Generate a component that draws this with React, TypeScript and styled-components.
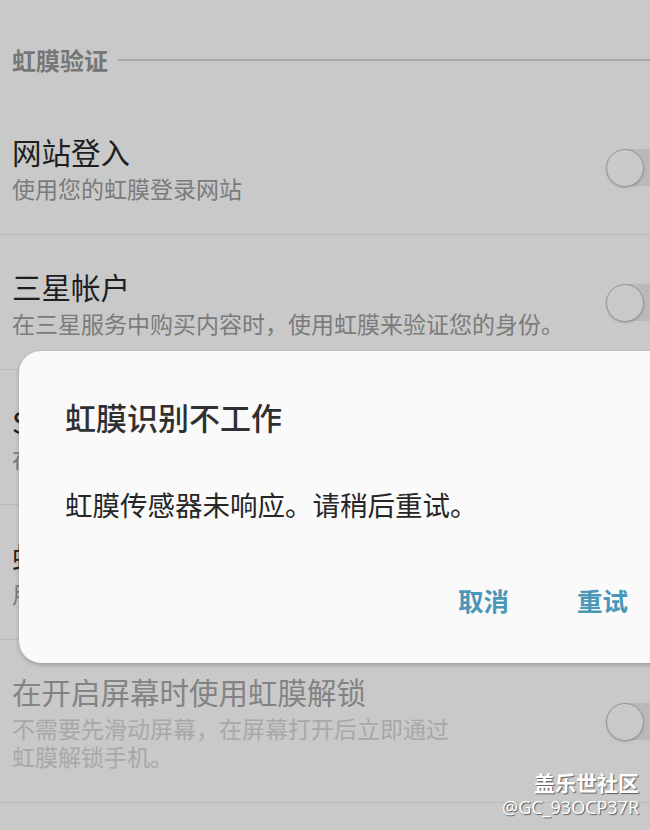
import * as React from 'react'
import styled, { createGlobalStyle } from 'styled-components'

const GlobalStyle = createGlobalStyle`
  html, body {
    margin: 0;
    padding: 0;
    background: #c9c9c9;
    overflow: hidden;
  }
  body {
    font-family: 'Noto Sans CJK SC', 'Noto Sans', sans-serif;
  }
`

const Screen = styled.div`
  position: relative;
  width: 650px;
  height: 830px;
  overflow: hidden;
  background: #c9c9c9;
`

const SectionHeader = styled.div`
  display: flex;
  align-items: center;
  gap: 10px;
  padding: 45px 0 25px 12px;
  height: 30px;
`

const HeaderLabel = styled.span`
  font-size: 24px;
  font-weight: 700;
  line-height: 30px;
  color: #767676;
  white-space: nowrap;
`

const HeaderLine = styled.div`
  flex: 1;
  height: 2px;
  background: #a8a8a8;
`

const Row = styled.div`
  display: flex;
  align-items: center;
  padding: 33px 0 32px 12px;
  border-bottom: 1px solid #b9b9b9;
`

const RowText = styled.div`
  flex: 1;
  min-width: 0;
`

const Title = styled.div<{ disabled?: boolean }>`
  font-size: 29.5px;
  line-height: 36px;
  color: ${(p) => (p.disabled ? '#838383' : '#1e1e1e')};
  white-space: nowrap;
`

const Subtitle = styled.div<{ disabled?: boolean }>`
  margin-top: 5px;
  font-size: 23px;
  line-height: 28px;
  color: ${(p) => (p.disabled ? '#a8a8a8' : '#7b7b7b')};
  white-space: nowrap;
`

const Switch = styled.div`
  position: relative;
  flex: none;
  width: 64px;
  height: 39px;
  margin-right: -20px;
  display: flex;
  align-items: center;
`

const Track = styled.div`
  position: absolute;
  left: 19px;
  right: 0;
  top: 1px;
  bottom: 1px;
  background: #b9b9b9;
`

const Thumb = styled.div`
  position: relative;
  width: 36px;
  height: 36px;
  border-radius: 50%;
  background: #c9c9c9;
  border: 1.5px solid #979797;
  box-shadow: 0 1px 2px rgba(0, 0, 0, 0.18);
`

const Dialog = styled.div`
  position: absolute;
  left: 19px;
  right: -30px;
  top: 351px;
  height: 312px;
  box-sizing: border-box;
  padding: 47px 52px 0 46px;
  background: #fafafa;
  border-radius: 22px;
  box-shadow: 0 2px 4px rgba(0, 0, 0, 0.22);
`

const DialogTitle = styled.div`
  font-size: 31px;
  line-height: 38px;
  font-weight: 500;
  color: #303030;
`

const DialogBody = styled.div`
  margin-top: 50px;
  font-size: 27.5px;
  line-height: 36px;
  color: #262626;
`

const DialogActions = styled.div`
  display: flex;
  justify-content: flex-end;
  gap: 68px;
  margin-top: 60px;
`

const ActionButton = styled.button`
  border: none;
  background: none;
  padding: 0;
  font-family: inherit;
  font-size: 25.5px;
  line-height: 36px;
  font-weight: 700;
  color: #4b97b8;
`

const Watermark = styled.div`
  position: absolute;
  right: 11px;
  bottom: 12px;
  text-align: right;
  color: #ffffff;
  text-shadow: 1px 1px 1px rgba(0, 0, 0, 0.55);
`

const WatermarkName = styled.div`
  font-size: 21px;
  line-height: 26px;
  font-weight: 700;
`

const WatermarkId = styled.div`
  margin-top: 1px;
  font-family: 'Open Sans', 'Noto Sans', sans-serif;
  font-size: 18px;
  line-height: 22px;
`

interface Item {
  title: string;
  subtitle: React.ReactNode;
  disabled?: boolean;
}

const items: Item[] = [
  { title: '网站登入', subtitle: '使用您的虹膜登录网站' },
  { title: '三星帐户', subtitle: '在三星服务中购买内容时，使用虹膜来验证您的身份。' },
  { title: 'Samsung Pass', subtitle: '在应用程序和网站中使用虹膜验证您的身份。' },
  { title: '虹膜解锁', subtitle: '用您的虹膜解锁手机。' },
  {
    title: '在开启屏幕时使用虹膜解锁',
    subtitle: (
      <>
        不需要先滑动屏幕，在屏幕打开后立即通过
        <br />
        虹膜解锁手机。
      </>
    ),
    disabled: true,
  },
]

const App: React.FunctionComponent = () => {
  return (
    <Screen>
      <GlobalStyle />
      <SectionHeader>
        <HeaderLabel>虹膜验证</HeaderLabel>
        <HeaderLine />
      </SectionHeader>
      {items.map((item, index) => (
        <Row key={index}>
          <RowText>
            <Title disabled={item.disabled}>{item.title}</Title>
            <Subtitle disabled={item.disabled}>{item.subtitle}</Subtitle>
          </RowText>
          <Switch>
            <Track />
            <Thumb />
          </Switch>
        </Row>
      ))}

      <Dialog>
        <DialogTitle>虹膜识别不工作</DialogTitle>
        <DialogBody>虹膜传感器未响应。请稍后重试。</DialogBody>
        <DialogActions>
          <ActionButton>取消</ActionButton>
          <ActionButton>重试</ActionButton>
        </DialogActions>
      </Dialog>

      <Watermark>
        <WatermarkName>盖乐世社区</WatermarkName>
        <WatermarkId>@GC_93OCP37R</WatermarkId>
      </Watermark>
    </Screen>
  )
}

export default App
